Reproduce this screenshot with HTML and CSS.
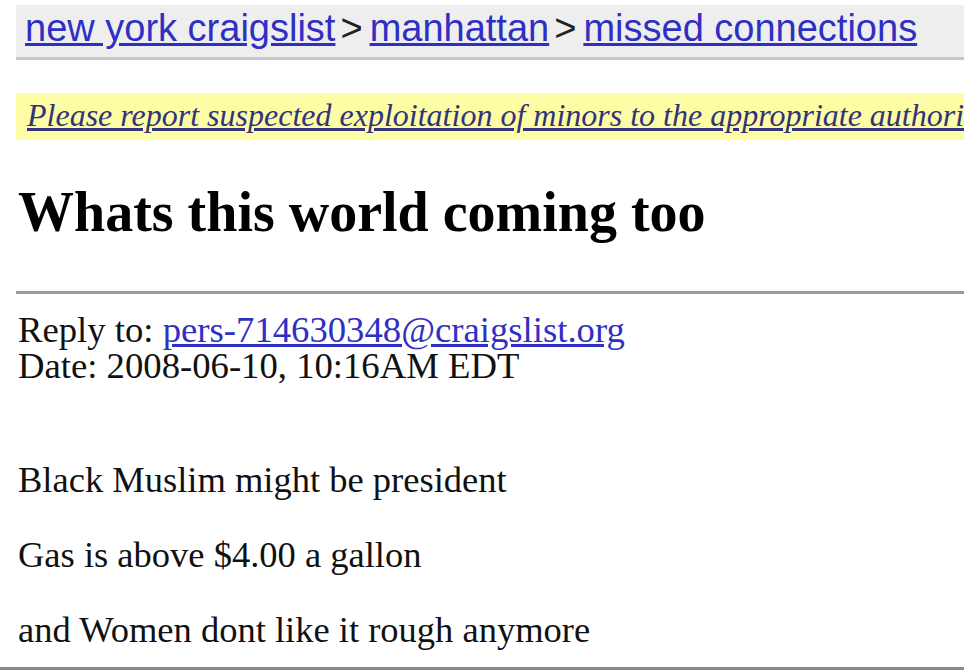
FILE: index.html
```html
<!DOCTYPE html>
<html>
<head>
<meta charset="utf-8">
<link rel="stylesheet" href="styles.css">
</head>
<body>
<div class="page">
  <div class="crumbs"><a href="#">new york craigslist</a><span class="sep">&gt;</span><a href="#">manhattan</a><span class="sep">&gt;</span><a href="#">missed connections</a></div>
  <div class="notice"><a href="#">Please report suspected exploitation of minors to the appropriate authorities.</a></div>
  <h2 class="title">Whats this world coming too</h2>
  <div class="rule"></div>
  <div class="meta">Reply to: <a href="#">pers-714630348@craigslist.org</a><br>Date: 2008-06-10, 10:16AM EDT</div>
  <div class="post">
    <p>Black Muslim might be president</p>
    <p>Gas is above $4.00 a gallon</p>
    <p>and Women dont like it rough anymore</p>
  </div>
</div>
<div class="bottom"></div>
</body>
</html>
```
FILE: styles.css
```css
html, body {
  margin: 0;
  padding: 0;
  background: #fff;
  width: 964px;
  height: 670px;
  overflow: hidden;
}
body {
  display: flex;
  flex-direction: column;
}
.page {
  flex: 1;
  padding: 5px 0 0 16px;
  font-family: "Liberation Serif", "Times New Roman", serif;
  color: #111;
  overflow: hidden;
}
.crumbs {
  height: 52px;
  background: #eeeeee;
  border-bottom: 3px solid #c8c8c8;
  padding-left: 9px;
  font-family: "Liberation Sans", Arial, sans-serif;
  font-size: 38px;
  line-height: 46px;
  white-space: nowrap;
  color: #222;
}
.crumbs a {
  color: #2f2fc4;
  text-decoration: underline;
}
.crumbs .sep {
  margin: 0 7px 0 5px;
}
.notice {
  margin-top: 33px;
  height: 47px;
  background: #fdfda6;
  padding-left: 11px;
  font-size: 32px;
  line-height: 44px;
  font-style: italic;
  white-space: nowrap;
  overflow: hidden;
}
.notice a {
  color: #33337a;
  text-decoration: underline;
}
.title {
  margin: 37px 0 0 2px;
  font-size: 56px;
  line-height: 70px;
  font-weight: bold;
  color: #000;
}
.rule {
  margin-top: 44px;
  height: 3px;
  background: #9a9a9a;
}
.meta {
  margin: 18px 0 0 2px;
  font-size: 36.7px;
  line-height: 36px;
}
.meta a {
  color: #2f2fc4;
  text-decoration: underline;
}
.post {
  margin-left: 2px;
  margin-top: 76px;
  font-size: 36.5px;
  line-height: 40px;
}
.post p {
  margin: 0 0 35px 0;
}
.bottom {
  height: 3px;
  background: #8a8a8a;
}
```
